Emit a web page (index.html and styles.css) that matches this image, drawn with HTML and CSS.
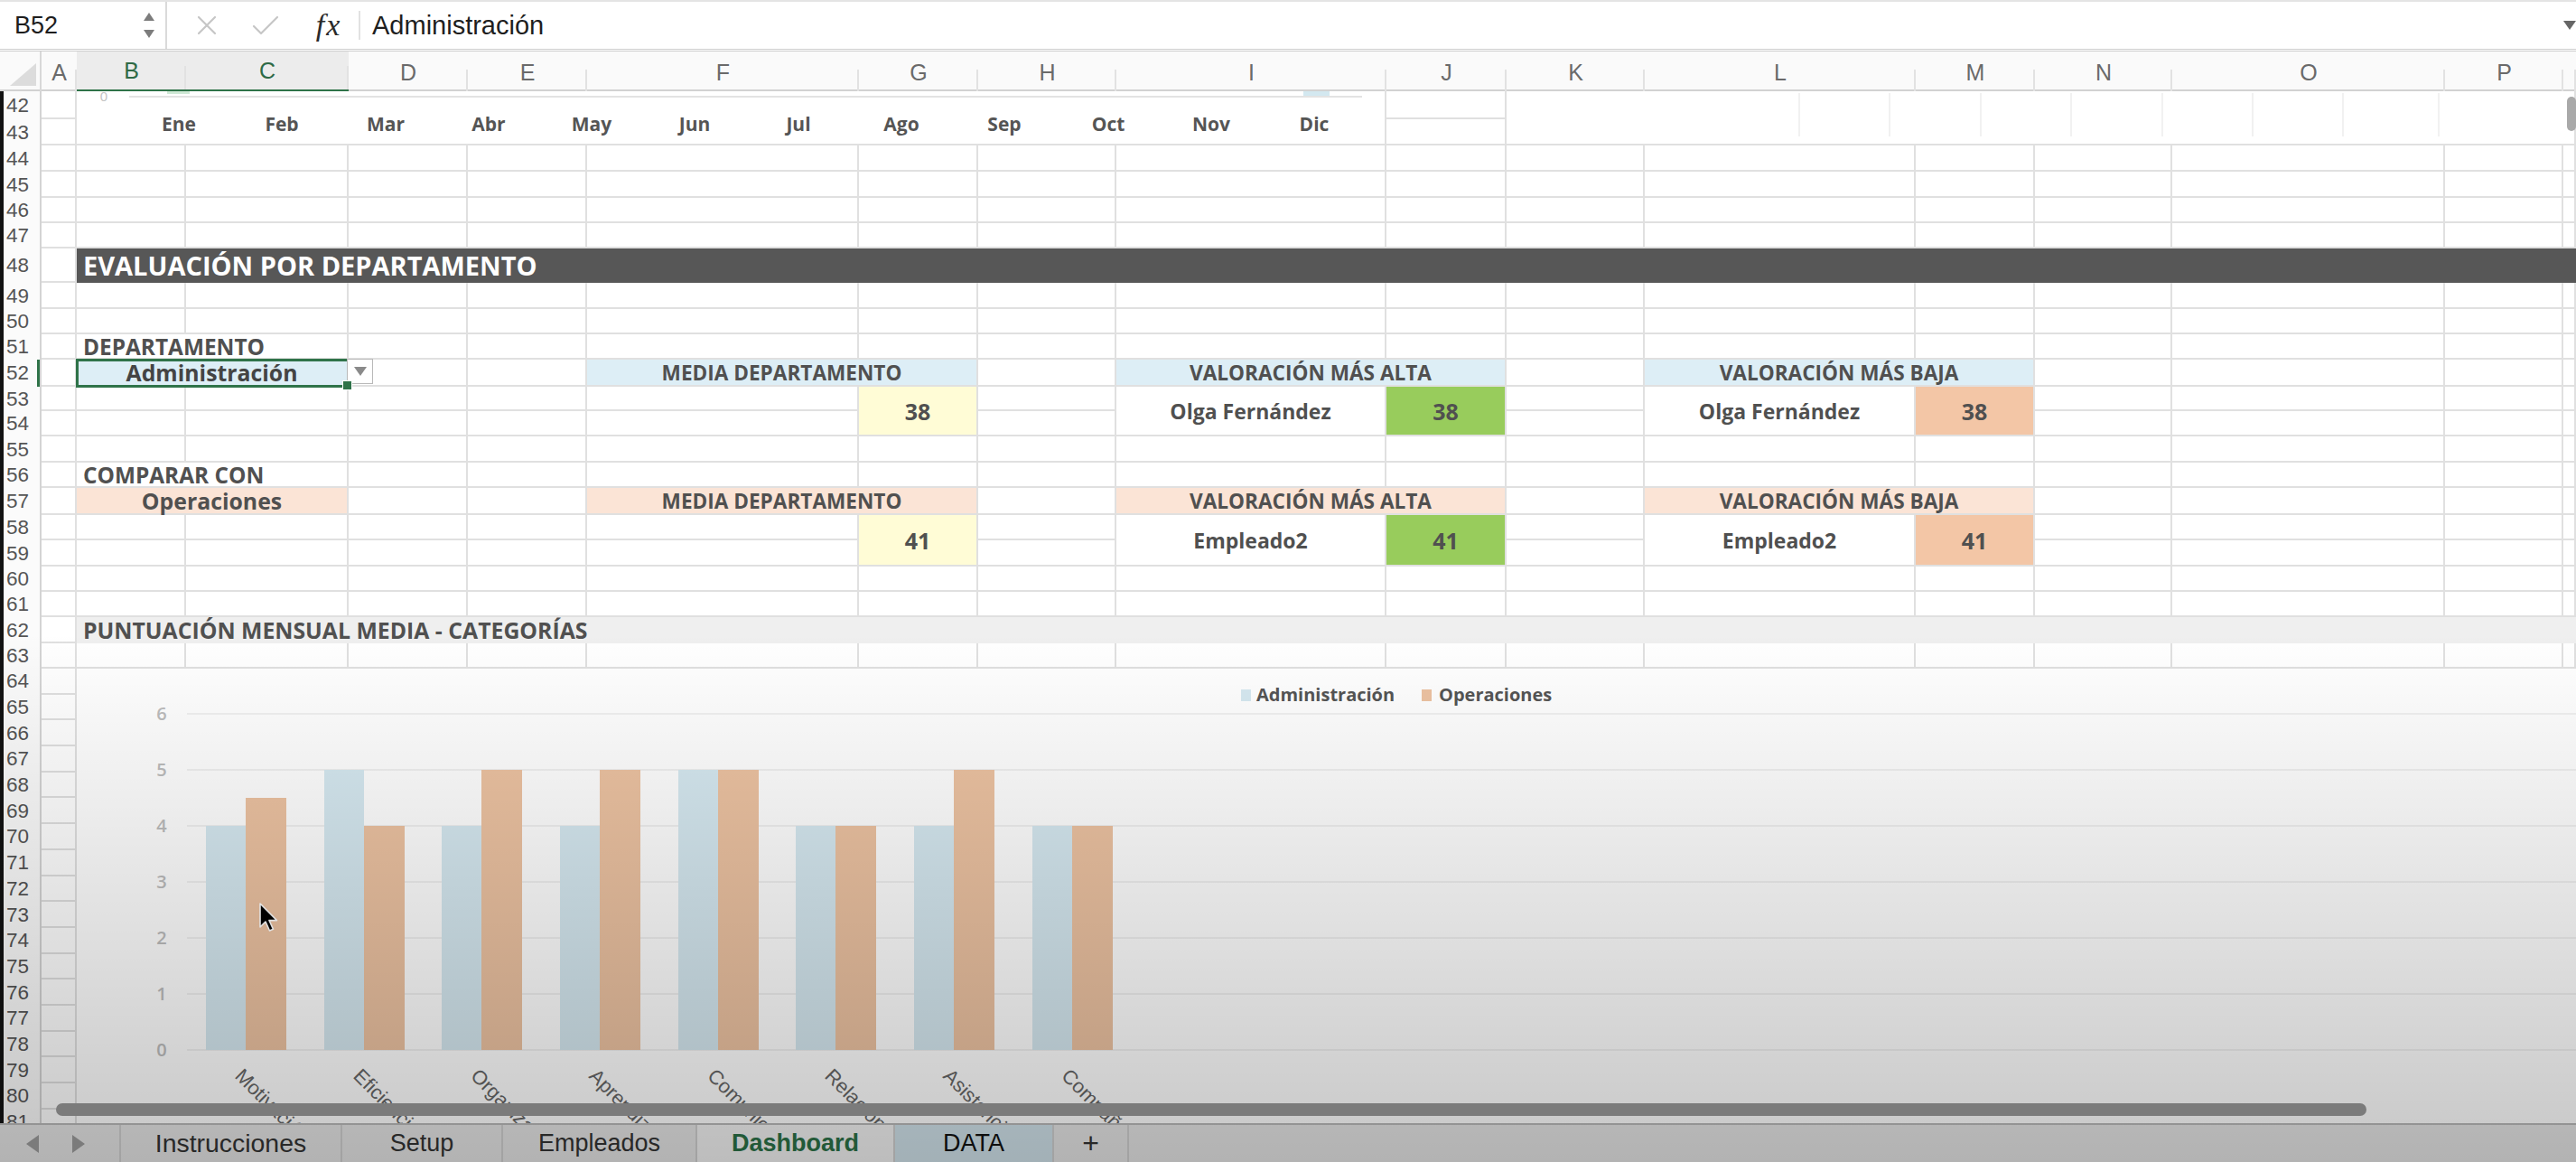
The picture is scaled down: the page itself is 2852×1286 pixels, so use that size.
FILE: index.html
```html
<!DOCTYPE html>
<html lang="es">
<head>
<meta charset="utf-8">
<title>Evaluación de empleados - Dashboard</title>
<link rel="stylesheet" href="styles.css">
</head>
<body>
<div class="app">
  <header class="fbar">
    <div class="namebox">
      <span class="ref">B52</span>
      <svg class="spin" width="14" height="34" viewBox="0 0 14 34"><path d="M1 12 L7 3 L13 12 Z"/><path d="M1 22 L7 31 L13 22 Z"/></svg>
    </div>
    <svg class="ficon cancel" width="24" height="24" viewBox="0 0 24 24"><path d="M3 3 L21 21 M21 3 L3 21"/></svg>
    <svg class="ficon enter" width="30" height="24" viewBox="0 0 30 24"><path d="M2 13 L10 21 L28 3"/></svg>
    <span class="fx">fx</span>
    <span class="fsep"></span>
    <span class="formula">Administración</span>
    <svg class="fexpand" width="14" height="10" viewBox="0 0 14 10"><path d="M0 0 L14 0 L7 10 Z"/></svg>
  </header>

  <div class="colheads">
    <div class="corner"><svg width="46" height="42" viewBox="0 0 46 42"><path d="M11 38 L40 38 L40 13 Z"/></svg></div>
    <div class="ch">A</div><div class="ch sel">B</div><div class="ch sel">C</div><div class="ch">D</div><div class="ch">E</div><div class="ch">F</div><div class="ch">G</div><div class="ch">H</div><div class="ch">I</div><div class="ch">J</div><div class="ch">K</div><div class="ch">L</div><div class="ch">M</div><div class="ch">N</div><div class="ch">O</div><div class="ch">P</div><div class="ch"></div>
  </div>

  <div class="body">
    <div class="rowheads">
      <div>42</div><div>43</div><div>44</div><div>45</div><div>46</div><div>47</div><div>48</div><div>49</div><div>50</div><div>51</div>
      <div class="on">52</div><div>53</div><div>54</div><div>55</div><div>56</div><div>57</div><div>58</div><div>59</div><div>60</div><div>61</div>
      <div>62</div><div>63</div><div>64</div><div>65</div><div>66</div><div>67</div><div>68</div><div>69</div><div>70</div><div>71</div>
      <div>72</div><div>73</div><div>74</div><div>75</div><div>76</div><div>77</div><div>78</div><div>79</div><div>80</div><div>81</div>
    </div>

    <div class="cells">
      <div class="cBI r42 remnant">
        <svg width="1450" height="60" viewBox="0 0 1450 60">
          <rect class="rg" x="100" y="0" width="25" height="3"/>
          <rect class="rb" x="1358" y="0" width="29" height="5"/>
          <line class="axisline" x1="58" y1="6" x2="1423" y2="6"/>
          <text class="zero" x="30" y="11">0</text>
          <g class="months">
            <text x="113" y="44">Ene</text><text x="227" y="44">Feb</text><text x="342" y="44">Mar</text><text x="456" y="44">Abr</text>
            <text x="570" y="44">May</text><text x="684" y="44">Jun</text><text x="799" y="44">Jul</text><text x="913" y="44">Ago</text>
            <text x="1027" y="44">Sep</text><text x="1142" y="44">Oct</text><text x="1256" y="44">Nov</text><text x="1370" y="44">Dic</text>
          </g>
        </svg>
      </div>
      <div class="cKQ r42 remnant">
        <svg width="1184" height="58" viewBox="0 0 1184 58" class="faint">
          <line x1="324" y1="2" x2="324" y2="50"/><line x1="424" y1="2" x2="424" y2="50"/><line x1="525" y1="2" x2="525" y2="50"/><line x1="625" y1="2" x2="625" y2="50"/>
          <line x1="726" y1="2" x2="726" y2="50"/><line x1="826" y1="2" x2="826" y2="50"/><line x1="926" y1="2" x2="926" y2="50"/><line x1="1032" y1="2" x2="1032" y2="50"/>
        </svg>
      </div>

      <div class="cBQ r48 cell band">EVALUACIÓN POR DEPARTAMENTO</div>

      <div class="cBC r51 cell label">DEPARTAMENTO</div>
      <div class="cBC r52 cell blue big picker">Administración<span class="dd"><svg width="14" height="10" viewBox="0 0 14 10"><path d="M0 0 L14 0 L7 10 Z"/></svg></span></div>
      <div class="cFG r52 cell blue hdr">MEDIA DEPARTAMENTO</div>
      <div class="cIJ r52 cell blue hdr">VALORACIÓN MÁS ALTA</div>
      <div class="cLM r52 cell blue hdr">VALORACIÓN MÁS BAJA</div>
      <div class="cG r53 cell yellow val">38</div>
      <div class="cI r53 cell">Olga Fernández</div>
      <div class="cJ r53 cell green val">38</div>
      <div class="cL r53 cell">Olga Fernández</div>
      <div class="cM r53 cell orange val">38</div>

      <div class="cBC r56 cell label">COMPARAR CON</div>
      <div class="cBC r57 cell peach big">Operaciones</div>
      <div class="cFG r57 cell peach hdr">MEDIA DEPARTAMENTO</div>
      <div class="cIJ r57 cell peach hdr">VALORACIÓN MÁS ALTA</div>
      <div class="cLM r57 cell peach hdr">VALORACIÓN MÁS BAJA</div>
      <div class="cG r58 cell yellow val">41</div>
      <div class="cI r58 cell">Empleado2</div>
      <div class="cJ r58 cell green val">41</div>
      <div class="cL r58 cell">Empleado2</div>
      <div class="cM r58 cell orange val">41</div>

      <div class="cBQ r62 cell subband">PUNTUACIÓN MENSUAL MEDIA - CATEGORÍAS</div>

      <div class="cBQ r64 chart">
        <svg width="2769" height="517" viewBox="0 0 2769 517">
          <g class="gridl">
            <line x1="124" y1="50" x2="2769" y2="50"/><line x1="124" y1="112" x2="2769" y2="112"/><line x1="124" y1="174" x2="2769" y2="174"/>
            <line x1="124" y1="236" x2="2769" y2="236"/><line x1="124" y1="298" x2="2769" y2="298"/><line x1="124" y1="360" x2="2769" y2="360"/>
            <line x1="124" y1="422" x2="2769" y2="422"/>
          </g>
          <g class="ax">
            <text x="96" y="57">6</text><text x="96" y="119">5</text><text x="96" y="181">4</text><text x="96" y="243">3</text>
            <text x="96" y="305">2</text><text x="96" y="367">1</text><text x="96" y="429">0</text>
          </g>
          <g class="legend">
            <rect class="ba" x="1291" y="23" width="11" height="13"/><text x="1308" y="36">Administración</text>
            <rect class="bo" x="1491" y="23" width="11" height="13"/><text x="1510" y="36">Operaciones</text>
          </g>
          <g class="bars">
            <rect class="ba" x="145" y="174" width="44" height="248"/><rect class="bo" x="189" y="143" width="45" height="279"/>
            <rect class="ba" x="276" y="112" width="44" height="310"/><rect class="bo" x="320" y="174" width="45" height="248"/>
            <rect class="ba" x="406" y="174" width="44" height="248"/><rect class="bo" x="450" y="112" width="45" height="310"/>
            <rect class="ba" x="537" y="174" width="44" height="248"/><rect class="bo" x="581" y="112" width="45" height="310"/>
            <rect class="ba" x="668" y="112" width="44" height="310"/><rect class="bo" x="712" y="112" width="45" height="310"/>
            <rect class="ba" x="798" y="174" width="44" height="248"/><rect class="bo" x="842" y="174" width="45" height="248"/>
            <rect class="ba" x="929" y="174" width="44" height="248"/><rect class="bo" x="973" y="112" width="45" height="310"/>
            <rect class="ba" x="1060" y="174" width="44" height="248"/><rect class="bo" x="1104" y="174" width="45" height="248"/>
          </g>
          <g class="cats">
            <text x="176" y="452" transform="rotate(45 176 452)">Motivación</text>
            <text x="307" y="452" transform="rotate(45 307 452)">Eficiencia</text>
            <text x="437" y="452" transform="rotate(45 437 452)">Organización</text>
            <text x="568" y="452" transform="rotate(45 568 452)">Aprendizaje</text>
            <text x="699" y="452" transform="rotate(45 699 452)">Comunicación</text>
            <text x="829" y="452" transform="rotate(45 829 452)">Relaciones</text>
            <text x="960" y="452" transform="rotate(45 960 452)">Asistencia</text>
            <text x="1091" y="452" transform="rotate(45 1091 452)">Compañerismo</text>
          </g>
          <path class="cursor" transform="translate(205 260)" d="M0 0 L0 26 L6 20 L10.5 30 L14.5 28.3 L10 18.6 L18.5 18.6 Z"/>
        </svg>
      </div>

      <i></i><i></i><i></i><i></i><i></i><i></i><i></i><i></i><i></i><i></i><i></i><i></i><i></i><i></i><i></i><i></i><i></i><i></i><i></i><i></i>
      <i></i><i></i><i></i><i></i><i></i><i></i><i></i><i></i><i></i><i></i><i></i><i></i><i></i><i></i><i></i><i></i><i></i><i></i><i></i><i></i>
      <i></i><i></i><i></i><i></i><i></i><i></i><i></i><i></i><i></i><i></i><i></i><i></i><i></i><i></i><i></i><i></i><i></i><i></i><i></i><i></i>
      <i></i><i></i><i></i><i></i><i></i><i></i><i></i><i></i><i></i><i></i><i></i><i></i><i></i><i></i><i></i><i></i><i></i><i></i><i></i><i></i>
      <i></i><i></i><i></i><i></i><i></i><i></i><i></i><i></i><i></i><i></i><i></i><i></i><i></i><i></i><i></i><i></i><i></i><i></i><i></i><i></i>
      <i></i><i></i><i></i><i></i><i></i><i></i><i></i><i></i><i></i><i></i><i></i><i></i><i></i><i></i><i></i><i></i><i></i><i></i><i></i><i></i>
      <i></i><i></i><i></i><i></i><i></i><i></i><i></i><i></i><i></i><i></i><i></i><i></i><i></i><i></i><i></i><i></i><i></i><i></i><i></i><i></i>
      <i></i><i></i><i></i><i></i><i></i><i></i><i></i><i></i><i></i><i></i><i></i><i></i><i></i><i></i><i></i><i></i><i></i><i></i><i></i><i></i>
      <i></i><i></i><i></i><i></i><i></i><i></i><i></i><i></i><i></i><i></i><i></i><i></i><i></i><i></i><i></i><i></i><i></i><i></i><i></i><i></i>
      <i></i><i></i><i></i><i></i><i></i><i></i><i></i><i></i><i></i><i></i><i></i><i></i><i></i><i></i><i></i><i></i><i></i><i></i><i></i><i></i>
      <i></i><i></i><i></i><i></i><i></i><i></i><i></i><i></i><i></i><i></i><i></i><i></i><i></i><i></i><i></i><i></i><i></i><i></i><i></i><i></i>
      <i></i><i></i><i></i><i></i><i></i><i></i><i></i><i></i><i></i><i></i><i></i><i></i><i></i><i></i><i></i><i></i><i></i><i></i><i></i><i></i>
      <i></i><i></i><i></i><i></i><i></i><i></i><i></i><i></i><i></i><i></i><i></i><i></i><i></i><i></i><i></i><i></i><i></i><i></i><i></i><i></i>
      <i></i><i></i><i></i><i></i><i></i><i></i><i></i><i></i><i></i><i></i><i></i><i></i><i></i><i></i><i></i><i></i><i></i><i></i><i></i><i></i>
      <i></i><i></i><i></i><i></i><i></i><i></i><i></i><i></i><i></i><i></i><i></i><i></i><i></i><i></i><i></i><i></i><i></i><i></i><i></i><i></i>
    </div>
  </div>

  <footer class="tabs">
    <div class="nav">
      <svg width="14" height="20" viewBox="0 0 14 20"><path d="M14 0 L14 20 L0 10 Z"/></svg>
      <svg width="14" height="20" viewBox="0 0 14 20"><path d="M0 0 L0 20 L14 10 Z"/></svg>
    </div>
    <div class="tab t1">Instrucciones</div>
    <div class="tab t2">Setup</div>
    <div class="tab t3">Empleados</div>
    <div class="tab t4 active">Dashboard</div>
    <div class="tab t5 colored">DATA</div>
    <div class="tab t6">+</div>
  </footer>

  <div class="vscroll"></div>
  <div class="shade"></div>
  <div class="hscroll"></div>
</div>
</body>
</html>
```

FILE: styles.css
```css
* { box-sizing: border-box; margin: 0; padding: 0; }
html, body { width: 2852px; height: 1286px; overflow: hidden; background: #fff; }
body { font-family: "Liberation Sans", Arial, sans-serif; color: #222; }

.app {
  position: relative;
  width: 2852px;
  height: 1286px;
  display: flex;
  flex-direction: column;
}

/* ---------- formula bar ---------- */
.fbar {
  flex: none;
  height: 57px;
  display: flex;
  align-items: center;
  background: #fff;
  border-top: 2px solid #e4e4e4;
  border-bottom: 3px double #cdcdcd;
}
.namebox {
  width: 185px;
  height: 100%;
  display: flex;
  align-items: center;
  justify-content: space-between;
  padding: 0 11px 0 16px;
  border-right: 2px solid #dadada;
}
.ref { font-size: 27px; color: #1e1e1e; }
.spin path { fill: #7c7c7c; }
.ficon {
  flex: none;
  fill: none;
  stroke: #c6c6c6;
  stroke-width: 2.2;
  stroke-linecap: round;
  stroke-linejoin: round;
}
.cancel { margin-left: 32px; }
.enter { margin-left: 38px; }
.fx {
  width: 34px;
  margin-left: 38px;
  font-family: "Liberation Serif", "Times New Roman", serif;
  font-style: italic;
  font-size: 34px;
  line-height: 1;
  letter-spacing: 2px;
  color: #2a2a2a;
  text-align: center;
}
.fsep { width: 2px; height: 32px; margin-left: 16px; background: #e2e2e2; }
.formula { margin-left: 13px; font-size: 29px; color: #1e1e1e; }
.fexpand { margin-left: auto; fill: #666; }

/* ---------- column headers ---------- */
.colheads {
  flex: none;
  height: 44px;
  display: grid;
  grid-template-columns: 46px 39px 121px 180px 132px 132px 301px 132px 153px 299px 133px 153px 300px 132px 152px 302px 131px 1fr;
  background: #fafafa;
  border-bottom: 2px solid #d2d2d2;
}
.corner { border-right: 2px solid #d8d8d8; }
.corner path { fill: #dcdcdc; }
.ch {
  display: flex;
  align-items: center;
  justify-content: center;
  font-size: 25px;
  color: #6a6a6a;
  background: linear-gradient(#e2e2e2, #e2e2e2) right bottom / 2px 26px no-repeat;
}
.ch.sel {
  background-color: #ececec;
  color: #2e6a46;
  border-bottom: 4px solid #2f7349;
}

/* ---------- sheet body ---------- */
.body {
  --rows: 31px 29px 29px 29px 28px 28px 38px 29px 28px 28px 30px 27px 28px 29px 28px 30px 28px 29px 28px 28px 29px 28px repeat(18, 28.7px);
  flex: none;
  height: 1142px;
  display: flex;
  overflow: hidden;
}
.rowheads {
  flex: none;
  width: 46px;
  display: grid;
  grid-template-rows: var(--rows);
  background: #fbfbfb;
  border-left: 4px solid #121212;
  border-right: 2px solid #d4d4d4;
}
.rowheads div {
  display: flex;
  align-items: center;
  padding-left: 3px;
  font-size: 22.5px;
  color: #555;
}
.rowheads .on { box-shadow: inset -3px 0 #2f7349; }

.cells {
  flex: 1;
  display: grid;
  grid-template-columns: 39px 121px 180px 132px 132px 301px 132px 153px 299px 133px 153px 300px 132px 152px 302px 131px 1fr;
  grid-template-rows: var(--rows);
  grid-auto-rows: 28px;
  overflow: hidden;
}
.cells > i,
.cell {
  border-right: 2px solid #e0e0e0;
  border-bottom: 2px solid #e0e0e0;
}

/* placement */
.cBC { grid-column: 2 / 4; }
.cFG { grid-column: 6 / 8; }
.cG  { grid-column: 7; }
.cI  { grid-column: 9; }
.cJ  { grid-column: 10; }
.cIJ { grid-column: 9 / 11; }
.cL  { grid-column: 12; }
.cM  { grid-column: 13; }
.cLM { grid-column: 12 / 14; }
.cBI { grid-column: 2 / 10; }
.cKQ { grid-column: 11 / 18; }
.cBQ { grid-column: 2 / 18; }
.r42 { grid-row: 1 / 3; }
.r48 { grid-row: 7; }
.r51 { grid-row: 10; }
.r52 { grid-row: 11; }
.r53 { grid-row: 12 / 14; }
.r56 { grid-row: 15; }
.r57 { grid-row: 16; }
.r58 { grid-row: 17 / 19; }
.r62 { grid-row: 21; }
.r64 { grid-row: 23 / 41; }

/* cell look */
.cell {
  display: flex;
  align-items: center;
  justify-content: center;
  font-family: "Open Sans", "Liberation Sans", sans-serif;
  font-weight: 700;
  font-size: 23px;
  color: #505050;
  white-space: nowrap;
}
.hdr { font-size: 22.6px; }
.big { font-size: 24.8px; }
.val { font-size: 25px; }
.band {
  justify-content: flex-start;
  padding-left: 7px;
  background: #575757;
  color: #fff;
  font-size: 29px;
  border-color: #575757;
}
.subband {
  justify-content: flex-start;
  padding-left: 7px;
  background: #efefef;
  font-size: 24.8px;
  border-color: #efefef;
}
.label { justify-content: flex-start; padding-left: 7px; font-size: 24.4px; }
.blue   { background: #ddeef6; }
.peach  { background: #fbe4d6; }
.yellow { background: #fffcd6; }
.green  { background: #98cc5c; }
.orange { background: #f3c6a6; }

.picker {
  position: relative;
  color: #444;
  outline: 3px solid #2f7349;
  outline-offset: -2px;
}
.picker::after {
  content: "";
  position: absolute;
  right: -6px;
  bottom: -6px;
  width: 9px;
  height: 9px;
  background: #2f7349;
  border: 1px solid #fff;
}
.dd {
  position: absolute;
  left: 100%;
  top: -1px;
  width: 29px;
  height: 28px;
  display: flex;
  align-items: center;
  justify-content: center;
  background: #fff;
  border: 1px solid #b9b9b9;
}
.dd path { fill: #8a8a8a; }

/* chart remnants at top */
.remnant {
  background: #fff;
  border-bottom: 2px solid #e0e0e0;
  border-right: 2px solid #e0e0e0;
  overflow: hidden;
}
.remnant svg { display: block; }
.rg { fill: #cfe8d5; }
.rb { fill: #d3e8f0; }
.axisline { stroke: #dadada; stroke-width: 1.5; }
.zero { font: 15px "Liberation Sans", sans-serif; fill: #c4c4c4; text-anchor: middle; }
.months text {
  font-family: "Open Sans", sans-serif;
  font-weight: 700;
  font-size: 21px;
  fill: #555;
  text-anchor: middle;
}
.faint line { stroke: #f1f1f1; stroke-width: 2; }

/* chart */
.chart {
  margin-left: -2px;
  background: #fff;
  overflow: hidden;
}
.chart svg { display: block; }
.gridl line { stroke: #ececec; stroke-width: 1.5; }
.ax text {
  font-family: "Open Sans", sans-serif;
  font-weight: 600;
  font-size: 20px;
  fill: #bdbdbd;
  text-anchor: middle;
}
.legend text {
  font-family: "Open Sans", sans-serif;
  font-weight: 700;
  font-size: 20px;
  fill: #555;
}
.ba { fill: #d6e9f1; }
.bo { fill: #edc3a2; }
.cats text {
  font-family: "Liberation Sans", sans-serif;
  font-size: 22px;
  fill: #666;
}
.cursor { fill: #000; stroke: #fff; stroke-width: 1.6; stroke-linejoin: round; }

/* ---------- sheet tabs ---------- */
.tabs {
  flex: none;
  height: 43px;
  display: flex;
  background: #e5e5e5;
  border-top: 2px solid #b9b9b9;
}
.nav {
  width: 132px;
  display: flex;
  align-items: center;
  gap: 37px;
  padding-left: 29px;
}
.nav path { fill: #9c9c9c; }
.tab {
  display: flex;
  align-items: center;
  justify-content: center;
  border-left: 2px solid #cfcfcf;
  font-size: 27px;
  color: #333;
}
.t1 { width: 245px; font-size: 28.4px; }
.t2 { width: 178px; }
.t3 { width: 215px; }
.t4 { width: 219px; }
.t5 { width: 176px; }
.t6 { width: 85px; border-right: 2px solid #cfcfcf; font-size: 32px; }
.tab.active { background: #f2f2f2; color: #2b7147; font-weight: 700; }
.tab.colored { background: #d0e2ea; color: #111; }

/* ---------- overlays ---------- */
.vscroll {
  position: absolute;
  left: 2842px;
  top: 107px;
  width: 10px;
  height: 38px;
  border-radius: 5px;
  background: #a9a9a9;
}
.shade {
  position: absolute;
  inset: 0;
  pointer-events: none;
  background: linear-gradient(to bottom, rgba(0, 0, 0, 0) 700px, rgba(0, 0, 0, 0.22) 1286px);
}
.hscroll {
  position: absolute;
  left: 62px;
  top: 1221px;
  width: 2558px;
  height: 14px;
  border-radius: 7px;
  background: #7b7b7b;
}
```
